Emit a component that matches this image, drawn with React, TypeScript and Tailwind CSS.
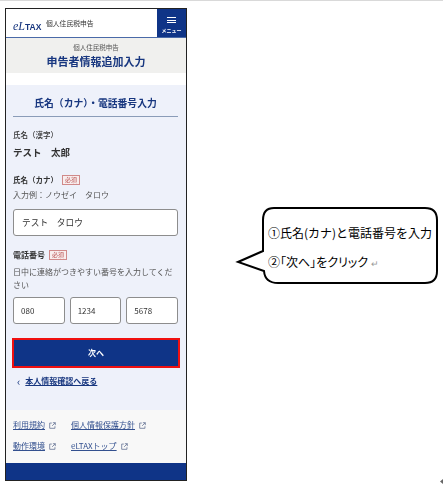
// App.tsx
const NAVY = 'text-[#17367f]';

const ExternalIcon = () => (
  <svg viewBox="0 0 10 10" className="w-[7px] h-[7px] ml-[4px] text-[#6b7a99]" fill="none" stroke="currentColor" strokeWidth="1.2">
    <path d="M4 1.5H1v7.5h7.5V6" />
    <path d="M5.5 1H9v3.5M9 1L4.5 5.5" />
  </svg>
);

const Required = () => (
  <span className="ml-[4px] h-[10px] w-[18px] border border-[#d08a8a] bg-[#f8eeee] text-[#b85050] text-[6px] leading-[8px] text-center font-normal">必須</span>
);

const FooterLink = ({ label, className }: { label: string; className?: string }) => (
  <a className={`flex items-center text-[8px] leading-none underline text-[#33508f] ${className ?? ''}`}>
    {label}
    <ExternalIcon />
  </a>
);

const Field = ({ value, className }: { value: string; className: string }) => (
  <div className={`flex items-center bg-white border border-[#8d8d8d] rounded-[3px] text-[#333] ${className}`}>{value}</div>
);

function Phone() {
  return (
    <div className="w-[182px] h-[473px] flex flex-col border-[1.5px] border-[#222] bg-white blur-[0.5px] shrink-0">
      {/* header */}
      <div className="h-[29px] flex items-stretch border-b-[1.5px] border-[#4a6aa8] shrink-0">
        <div className="flex-1 flex items-center pl-[7px]">
          <span className="w-[28px] whitespace-nowrap text-[#17367f] italic leading-none">
            <span className="text-[12px] font-['Liberation_Serif',serif]">eL</span>
            <span className="text-[8.5px] font-bold not-italic font-['Liberation_Sans',sans-serif]">TAX</span>
          </span>
          <span className="ml-[5px] text-[6.8px] text-[#333]">個人住民税申告</span>
        </div>
        <div className="w-[29px] bg-[#0f3487] flex flex-col items-center pt-[8px]">
          <div className="w-[9px] h-[6px] flex flex-col justify-between">
            <div className="h-px bg-white" />
            <div className="h-px bg-white" />
            <div className="h-px bg-white" />
          </div>
          <span className="text-[5px] leading-none mt-[4px] text-white whitespace-nowrap font-bold">メニュー</span>
        </div>
      </div>

      {/* page title */}
      <div className="h-[35px] bg-[#f0f0ee] flex flex-col items-center shrink-0">
        <span className="text-[6.5px] leading-none mt-[6px] text-[#555]">個人住民税申告</span>
        <h1 className={`text-[11px] leading-none mt-[5px] font-bold ${NAVY}`}>申告者情報追加入力</h1>
      </div>
      <div className="h-[12px] shrink-0" />

      {/* form */}
      <div className="h-[325px] bg-[#eef1fa] pl-[7px] pr-[8px] flex flex-col shrink-0">
        <div className="h-[32px] flex items-end justify-center pb-[7px] border-b-[1.5px] border-[#8a9cb8] shrink-0">
          <h2 className={`text-[9.8px] leading-none font-bold ${NAVY}`}>氏名（カナ）・電話番号入力</h2>
        </div>
        <div className="text-[7.5px] leading-none mt-[14px] font-medium text-[#333]">氏名（漢字）</div>
        <div className="text-[9.5px] leading-none mt-[9px] font-bold text-[#333]">テスト　太郎</div>
        <div className="flex items-center h-[10px] mt-[18px] text-[7.5px] font-bold text-[#333]">
          氏名（カナ）
          <Required />
        </div>
        <div className="text-[8px] leading-none mt-[6px] text-[#555]">入力例：ノウゼイ　タロウ</div>
        <Field value="テスト　タロウ" className="mt-[10px] h-[27px] pl-[8px] text-[8.7px]" />
        <div className="flex items-center h-[10px] mt-[14px] text-[8px] font-bold text-[#333]">
          電話番号
          <Required />
        </div>
        <p className="text-[8px] leading-[13px] mt-[5px] text-[#555]">日中に連絡がつきやすい番号を入力してください</p>
        <div className="grid grid-cols-3 gap-[5px] mt-[6px]">
          <Field value="080" className="h-[27px] pl-[7px] text-[8px]" />
          <Field value="1234" className="h-[27px] pl-[7px] text-[8px]" />
          <Field value="5678" className="h-[27px] pl-[7px] text-[8px]" />
        </div>
        <button className="mt-[14px] -ml-[1px] -mr-[2px] h-[30px] bg-[#0f3487] border-2 border-[#f01010] text-white text-[8px] font-bold">次へ</button>
        <div className="flex items-center mt-[9px] pl-[4px]">
          <span className={`text-[11px] leading-[8px] mr-[5px] ${NAVY}`}>‹</span>
          <a className={`text-[8px] leading-none font-bold underline ${NAVY}`}>本人情報確認へ戻る</a>
        </div>
      </div>

      {/* footer */}
      <div className="h-[53px] bg-[#f8f8f8] pl-[7px] pt-[11px] flex flex-col gap-[13px] shrink-0">
        <div className="flex items-center">
          <FooterLink label="利用規約" className="w-[58px]" />
          <FooterLink label="個人情報保護方針" />
        </div>
        <div className="flex items-center">
          <FooterLink label="動作環境" className="w-[58px]" />
          <FooterLink label="eLTAXトップ" />
        </div>
      </div>
      <div className="flex-1 bg-[#0f3487]" />
    </div>
  );
}

function Callout() {
  return (
    <div className="relative w-[207px] h-[81px] ml-[47px] mt-[196px] shrink-0">
      <svg viewBox="0 0 207 81" className="absolute inset-0 w-full h-full" fill="#fff" stroke="#000" strokeWidth="2">
        <path d="M40 4H191Q203 4 203 16V67Q203 79 191 79H44Q31 79 30 67L4 58L29 47V16Q29 4 40 4Z" />
      </svg>
      <div className="relative pl-[34px] pt-[21px] text-[12px] text-black whitespace-nowrap">
        <div className="h-[29px] leading-[16px]">①氏名(カナ)と電話番号を入力</div>
        <div className="leading-[16px] [font-feature-settings:'palt']">②「次へ」をクリック<span className="ml-[3px] text-[#999] text-[9px]">↵</span></div>
      </div>
    </div>
  );
}

export default function App() {
  return (
    <div className="relative w-[443px] h-[484px] bg-white overflow-hidden font-['Noto_Sans_CJK_JP','Liberation_Sans',sans-serif]">
      <div className="h-[1px] bg-[#d9d9d9]" />
      <div className="flex items-start pl-[5px] pt-[7px]">
        <Phone />
        <Callout />
      </div>
      <svg viewBox="0 0 3 5" className="absolute right-0 bottom-0 w-[3px] h-[5px]" fill="#666">
        <path d="M0 2.5L3 0V5Z" />
      </svg>
    </div>
  );
}
